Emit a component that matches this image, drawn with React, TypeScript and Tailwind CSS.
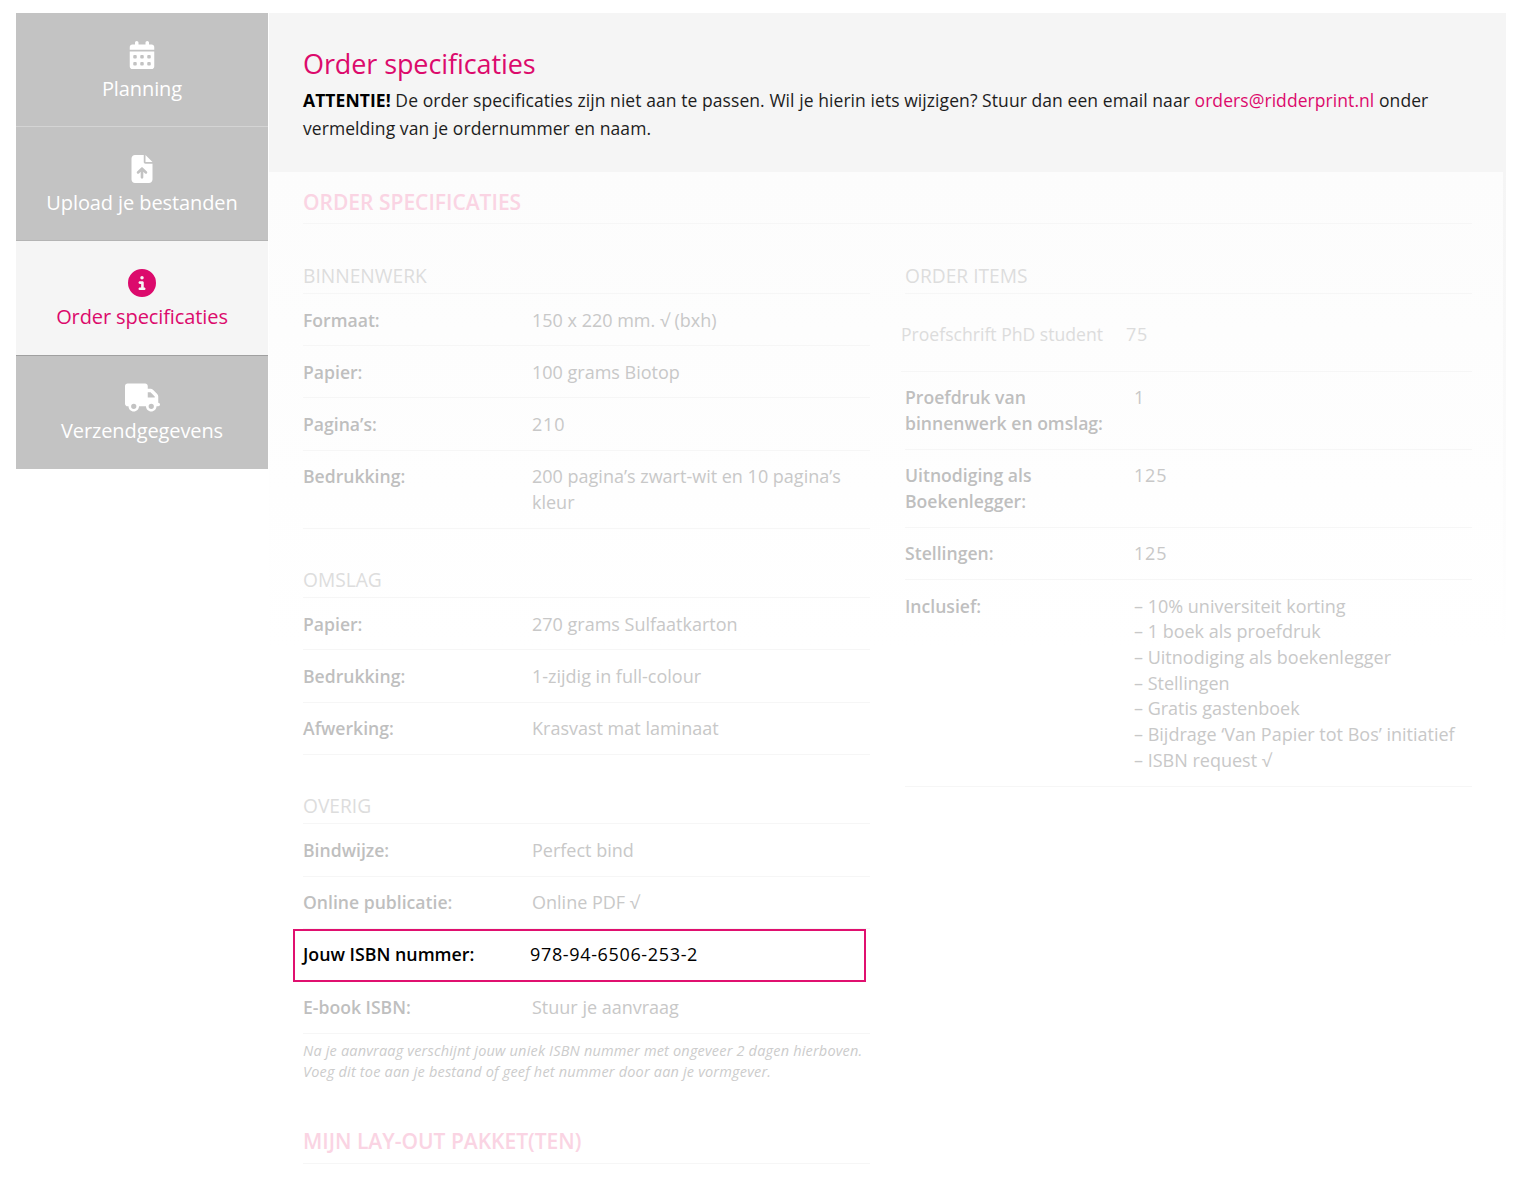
import React from 'react';
import { FaCalendarDays, FaFileArrowUp, FaCircleInfo, FaTruck } from 'react-icons/fa6';

const font = "font-['Open_Sans','Noto_Sans',sans-serif]";

function SideItem({ icon, label, className = '' }: { icon: React.ReactNode, label: string, className?: string }) {
  return (
    <div className={`flex flex-col items-center h-[114px] ${className}`}>
      <div className="h-[28px] flex items-center justify-center">{icon}</div>
      <span className="mt-[5px] text-[20px] leading-[30px] tracking-[-0.1px]">{label}</span>
    </div>
  );
}

function Row({ label, children }: { label: React.ReactNode, children: React.ReactNode }) {
  return (
    <div className="flex py-[12.6px] leading-[26px] border-b border-[#f6f6f6]">
      <div className="w-[229px] shrink-0 text-[17.6px] font-semibold text-[#bfbfbf]">{label}</div>
      <div className="text-[18px] text-[#c8c8c8]">{children}</div>
    </div>
  );
}

function Num({ children }: { children: React.ReactNode }) {
  return <span className="tracking-[0.8px]">{children}</span>;
}

function SubHead({ children, className = '' }: { children: React.ReactNode, className?: string }) {
  return <div className={`text-[19.2px] leading-[26px] pb-[4px] font-medium text-[#dddddd] border-b border-[#f6f6f6] ${className}`}>{children}</div>;
}

export default function App() {
  return (
    <div className={`${font} bg-white h-[1187px] overflow-hidden pt-[13px] pl-[16px] pr-[12px] flex`}>
      {/* Sidebar */}
      <div className="w-[252px] shrink-0">
        <SideItem icon={<FaCalendarDays size={28} />} label="Planning" className="pt-[28px] bg-[#c3c3c3] text-white border-b border-[#d4d4d4]" />
        <SideItem icon={<FaFileArrowUp size={28} />} label="Upload je bestanden" className="pt-[28px] bg-[#c3c3c3] text-white border-b border-[#b4b4b4]" />
        <SideItem icon={<FaCircleInfo size={28} />} label="Order specificaties" className="pt-[28px] bg-[#f5f5f5] text-[#dc0a6c]" />
        <SideItem icon={<FaTruck size={35} />} label="Verzendgegevens" className="pt-[27px] bg-[#c3c3c3] text-white border-t border-[#a0a0a0]" />
      </div>

      {/* Main */}
      <div className="flex-1 min-w-0 ml-[1px]">
        <div className="bg-[#f5f5f5] h-[159px] pt-[33px] pl-[34px] pr-[40px]">
          <h1 className="text-[27px] leading-[36px] text-[#dc0a6c] font-medium tracking-[-0.1px]">Order specificaties</h1>
          <p className="mt-[5px] text-[17.5px] leading-[27.5px] text-[#1d1d1d] tracking-[0.07px]">
            <b className="font-bold text-black">ATTENTIE!</b> De order specificaties zijn niet aan te passen. Wil je hierin iets wijzigen? Stuur dan een email naar <span className="text-[#dc0a6c]">orders@ridderprint.nl</span> onder vermelding van je ordernummer en naam.
          </p>
        </div>
        <div className="bg-gradient-to-b from-[#f5f5f5] to-white to-[47%] pr-[3px]">
          <div className="bg-gradient-to-b from-[#fcfcfc] to-white to-[47%] h-[1015px] pl-[34px] pr-[31px] pt-[15px]">
            <div className="text-[21px] leading-[30px] font-semibold text-[#fad4e3] pb-[6px] border-b border-[#f6f6f6]">ORDER SPECIFICATIES</div>

            <div className="grid grid-cols-2 gap-x-[35px] mt-[39px]">
              <div>
                <SubHead>BINNENWERK</SubHead>
                <Row label="Formaat:">150 x 220 mm. √ (bxh)</Row>
                <Row label="Papier:">100 grams Biotop</Row>
                <Row label="Pagina’s:"><Num>210</Num></Row>
                <Row label="Bedrukking:">200 pagina’s zwart-wit en 10 pagina’s kleur</Row>

                <SubHead className="mt-[38.5px]">OMSLAG</SubHead>
                <Row label="Papier:">270 grams Sulfaatkarton</Row>
                <Row label="Bedrukking:">1-zijdig in full-colour</Row>
                <Row label="Afwerking:">Krasvast mat laminaat</Row>

                <SubHead className="mt-[38.5px]">OVERIG</SubHead>
                <Row label="Bindwijze:">Perfect bind</Row>
                <Row label="Online publicatie:">Online PDF √</Row>

                <div className="-ml-[10px] w-[573px] h-[53px] border-2 border-[#e0106f] flex items-center pl-[8px] pb-[2px] text-black">
                  <div className="w-[227px] shrink-0 text-[17.8px] font-semibold">Jouw ISBN nummer:</div>
                  <div className="text-[18px] tracking-[0.65px]">978-94-6506-253-2</div>
                </div>

                <Row label="E-book ISBN:">Stuur je aanvraag</Row>
                <p className="mt-[6px] text-[14.5px] leading-[21px] tracking-[0.18px] italic text-[#cccccc]">
                  Na je aanvraag verschijnt jouw uniek ISBN nummer met ongeveer 2 dagen hierboven.<br />
                  Voeg dit toe aan je bestand of geef het nummer door aan je vormgever.
                </p>
                <div className="mt-[44px] text-[21px] leading-[30px] font-semibold text-[#fad4e3] pb-[7px] border-b border-[#f6f6f6]">MIJN LAY-OUT PAKKET(TEN)</div>
              </div>

              <div>
                <SubHead>ORDER ITEMS</SubHead>
                <div className="flex h-[77.5px] pt-[27px] -ml-[4px] leading-[26px] text-[#dcdcdc] border-b border-[#f6f6f6]">
                  <div className="w-[225px] shrink-0 text-[17.6px] font-medium">Proefschrift PhD student</div>
                  <div className="text-[18px]"><Num>75</Num></div>
                </div>
                <Row label={<>Proefdruk van<br />binnenwerk en omslag:</>}><Num>1</Num></Row>
                <Row label={<>Uitnodiging als<br />Boekenlegger:</>}><Num>125</Num></Row>
                <Row label="Stellingen:"><Num>125</Num></Row>
                <Row label="Inclusief:">
                  <div className="pt-[1px] leading-[25.7px]">
                    – 10% universiteit korting<br />
                    – 1 boek als proefdruk<br />
                    – Uitnodiging als boekenlegger<br />
                    – Stellingen<br />
                    – Gratis gastenboek<br />
                    – Bijdrage ‘Van Papier tot Bos’ initiatief<br />
                    – ISBN request √
                  </div>
                </Row>
              </div>
            </div>
          </div>
        </div>
      </div>
    </div>
  );
}
